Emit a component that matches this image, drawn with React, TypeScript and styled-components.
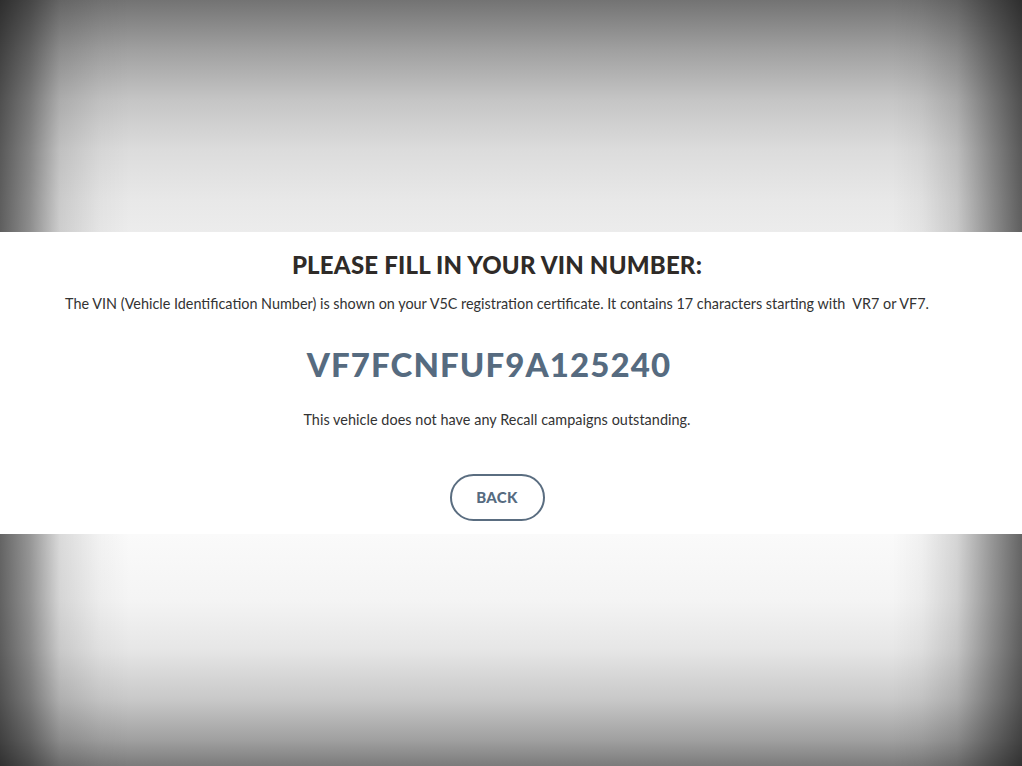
import React from "react";
import styled, { createGlobalStyle } from "styled-components";

const Global = createGlobalStyle`
  html, body { margin: 0; padding: 0; }
  body { font-family: "Lato", "Noto Sans", sans-serif; }
`;

const Page = styled.div`
  height: 766px;
  display: flex;
  flex-direction: column;
  justify-content: center;
  background:
    linear-gradient(to right,
      rgba(0,0,0,0.6) 0px,
      rgba(0,0,0,0.4) 30px,
      rgba(0,0,0,0.13) 60px,
      rgba(0,0,0,0.03) 100px,
      rgba(0,0,0,0) 130px,
      rgba(0,0,0,0) calc(100% - 130px),
      rgba(0,0,0,0.04) calc(100% - 100px),
      rgba(0,0,0,0.15) calc(100% - 65px),
      rgba(0,0,0,0.4) calc(100% - 30px),
      rgba(0,0,0,0.6) 100%),
    linear-gradient(to bottom,
      #737373 0px,
      #a0a0a0 50px,
      #c5c5c5 100px,
      #dcdcdc 150px,
      #e8e8e8 200px,
      #ececec 232px,
      #fafafa 535px,
      #f4f4f4 600px,
      #e6e6e6 650px,
      #c8c8c8 700px,
      #a0a0a0 740px,
      #7b7b7b 766px);
`;

const Band = styled.section`
  background: #ffffff;
  height: 302px;
  box-sizing: border-box;
  padding: 19px 28px 0 0;
  display: flex;
  flex-direction: column;
  align-items: center;
`;

const Title = styled.h1`
  margin: 0;
  font-size: 24px;
  line-height: 28px;
  font-weight: 900;
  color: #2f2b28;
  letter-spacing: 0.2px;
`;

const Description = styled.p`
  margin: 16px 0 0;
  font-size: 14.4px;
  line-height: 18px;
  color: #333333;
`;

const Vin = styled.div`
  margin-top: 31px;
  padding-right: 16px;
  font-size: 33px;
  line-height: 40px;
  font-weight: 900;
  color: #566b80;
  letter-spacing: 1.1px;
`;

const Message = styled.p`
  margin: 27px 0 0;
  font-size: 14.4px;
  line-height: 18px;
  color: #333333;
  letter-spacing: 0.05px;
`;

const BackButton = styled.button`
  margin-top: 45px;
  width: 95px;
  height: 47px;
  border: 2px solid #5a6d80;
  border-radius: 24px;
  background: #ffffff;
  color: #566b80;
  font-family: "Lato", "Noto Sans", sans-serif;
  font-weight: 900;
  font-size: 15px;
  line-height: 18px;
  padding: 0 0 2px;
  letter-spacing: 0.3px;
  cursor: pointer;
`;

export default function App() {
  return (
    <>
      <Global />
      <Page>
        <Band>
          <Title>PLEASE FILL IN YOUR VIN NUMBER:</Title>
          <Description>
            The VIN (Vehicle Identification Number) is shown on your V5C registration certificate. It contains 17 characters starting with&nbsp; VR7 or VF7.
          </Description>
          <Vin>VF7FCNFUF9A125240</Vin>
          <Message>This vehicle does not have any Recall campaigns outstanding.</Message>
          <BackButton>BACK</BackButton>
        </Band>
      </Page>
    </>
  );
}
